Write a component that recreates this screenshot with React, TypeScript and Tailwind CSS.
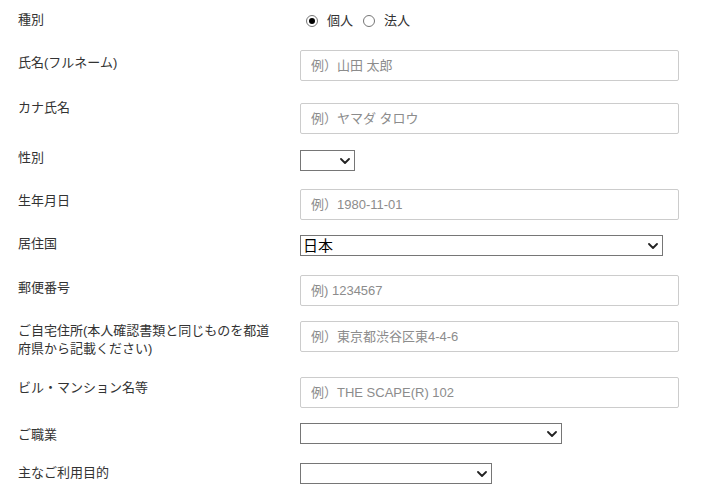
import { ReactNode } from "react";

const FONT = { fontFamily: '"Liberation Sans", "Noto Sans CJK JP", sans-serif' };

function Chevron() {
  return (
    <svg
      className="pointer-events-none absolute right-[5px] top-1/2 -translate-y-1/2"
      width="10"
      height="6"
      viewBox="0 0 10 6"
      fill="none"
    >
      <path d="M1 1l4 4 4-4" stroke="#222" strokeWidth="1.8" strokeLinecap="round" strokeLinejoin="round" />
    </svg>
  );
}

function TextInput({ placeholder }: { placeholder: string }) {
  return (
    <input
      type="text"
      placeholder={placeholder}
      className="block h-[31px] w-[379px] rounded-[2px] border border-[#cccccc] bg-white px-[10px] text-[13px] text-[#333] outline-none placeholder:text-[#8c8c8c]"
    />
  );
}

function Select({ width, children }: { width: string; children?: ReactNode }) {
  return (
    <div className={`relative h-[21px] ${width}`}>
      <select className="block h-[21px] w-full appearance-none border border-[#767676] bg-white pl-[2px] text-[15px] leading-[19px] text-black outline-none">
        {children}
      </select>
      <Chevron />
    </div>
  );
}

function Row({
  label,
  labelPad = "",
  fieldPad = "",
  rowMargin,
  children,
}: {
  label: ReactNode;
  labelPad?: string;
  fieldPad?: string;
  rowMargin: string;
  children: ReactNode;
}) {
  return (
    <div className={`flex items-start pl-[18px] ${rowMargin}`}>
      <div className={`w-[264px] text-[13px] leading-[18px] text-[#333] ${labelPad}`}>{label}</div>
      <div className={`ml-[18px] ${fieldPad}`}>{children}</div>
    </div>
  );
}

function Radio({ checked, label }: { checked?: boolean; label: string }) {
  return (
    <label className="flex items-center">
      <span className="flex h-[12px] w-[12px] items-center justify-center rounded-full border border-[#767676] bg-white">
        {checked && <span className="h-[6px] w-[6px] rounded-full bg-black" />}
      </span>
      <span className="ml-[9px] text-[13px] leading-[18px] text-[#333]">{label}</span>
    </label>
  );
}

export default function App() {
  return (
    <div className="min-h-[503px] w-[704px] bg-white pt-[11px]" style={FONT}>
      <Row label="種別" rowMargin="mt-0">
        <div className="flex items-center gap-[10px] pl-[6px] pt-[1px]">
          <Radio checked label="個人" />
          <Radio label="法人" />
        </div>
      </Row>
      <Row label="氏名(フルネーム)" rowMargin="mt-[20px]" labelPad="pt-[4px]">
        <TextInput placeholder="例）山田 太郎" />
      </Row>
      <Row label="カナ氏名" rowMargin="mt-[18px]" fieldPad="pt-[4px]">
        <TextInput placeholder="例）ヤマダ タロウ" />
      </Row>
      <Row label="性別" rowMargin="mt-[15px]" fieldPad="pt-[1px]">
        <Select width="w-[55px]" />
      </Row>
      <Row label="生年月日" rowMargin="mt-[18px]" labelPad="pt-[3px]">
        <TextInput placeholder="例）1980-11-01" />
      </Row>
      <Row label="居住国" rowMargin="mt-[15px]">
        <Select width="w-[363px]">
          <option>日本</option>
        </Select>
      </Row>
      <Row label="郵便番号" rowMargin="mt-[19px]" labelPad="pt-[4px]">
        <TextInput placeholder="例) 1234567" />
      </Row>
      <Row
        label="ご自宅住所(本人確認書類と同じものを都道府県から記載ください)"
        rowMargin="mt-[15px]"
        labelPad="pt-[1px]"
      >
        <TextInput placeholder="例）東京都渋谷区東4-4-6" />
      </Row>
      <Row label="ビル・マンション名等" rowMargin="mt-[19px]" labelPad="pt-[2px]">
        <TextInput placeholder="例）THE SCAPE(R) 102" />
      </Row>
      <Row label="ご職業" rowMargin="mt-[15px]" labelPad="pt-[3px]">
        <Select width="w-[262px]" />
      </Row>
      <Row label="主なご利用目的" rowMargin="mt-[19px]" labelPad="pt-[1px]">
        <Select width="w-[192px]" />
      </Row>
    </div>
  );
}
